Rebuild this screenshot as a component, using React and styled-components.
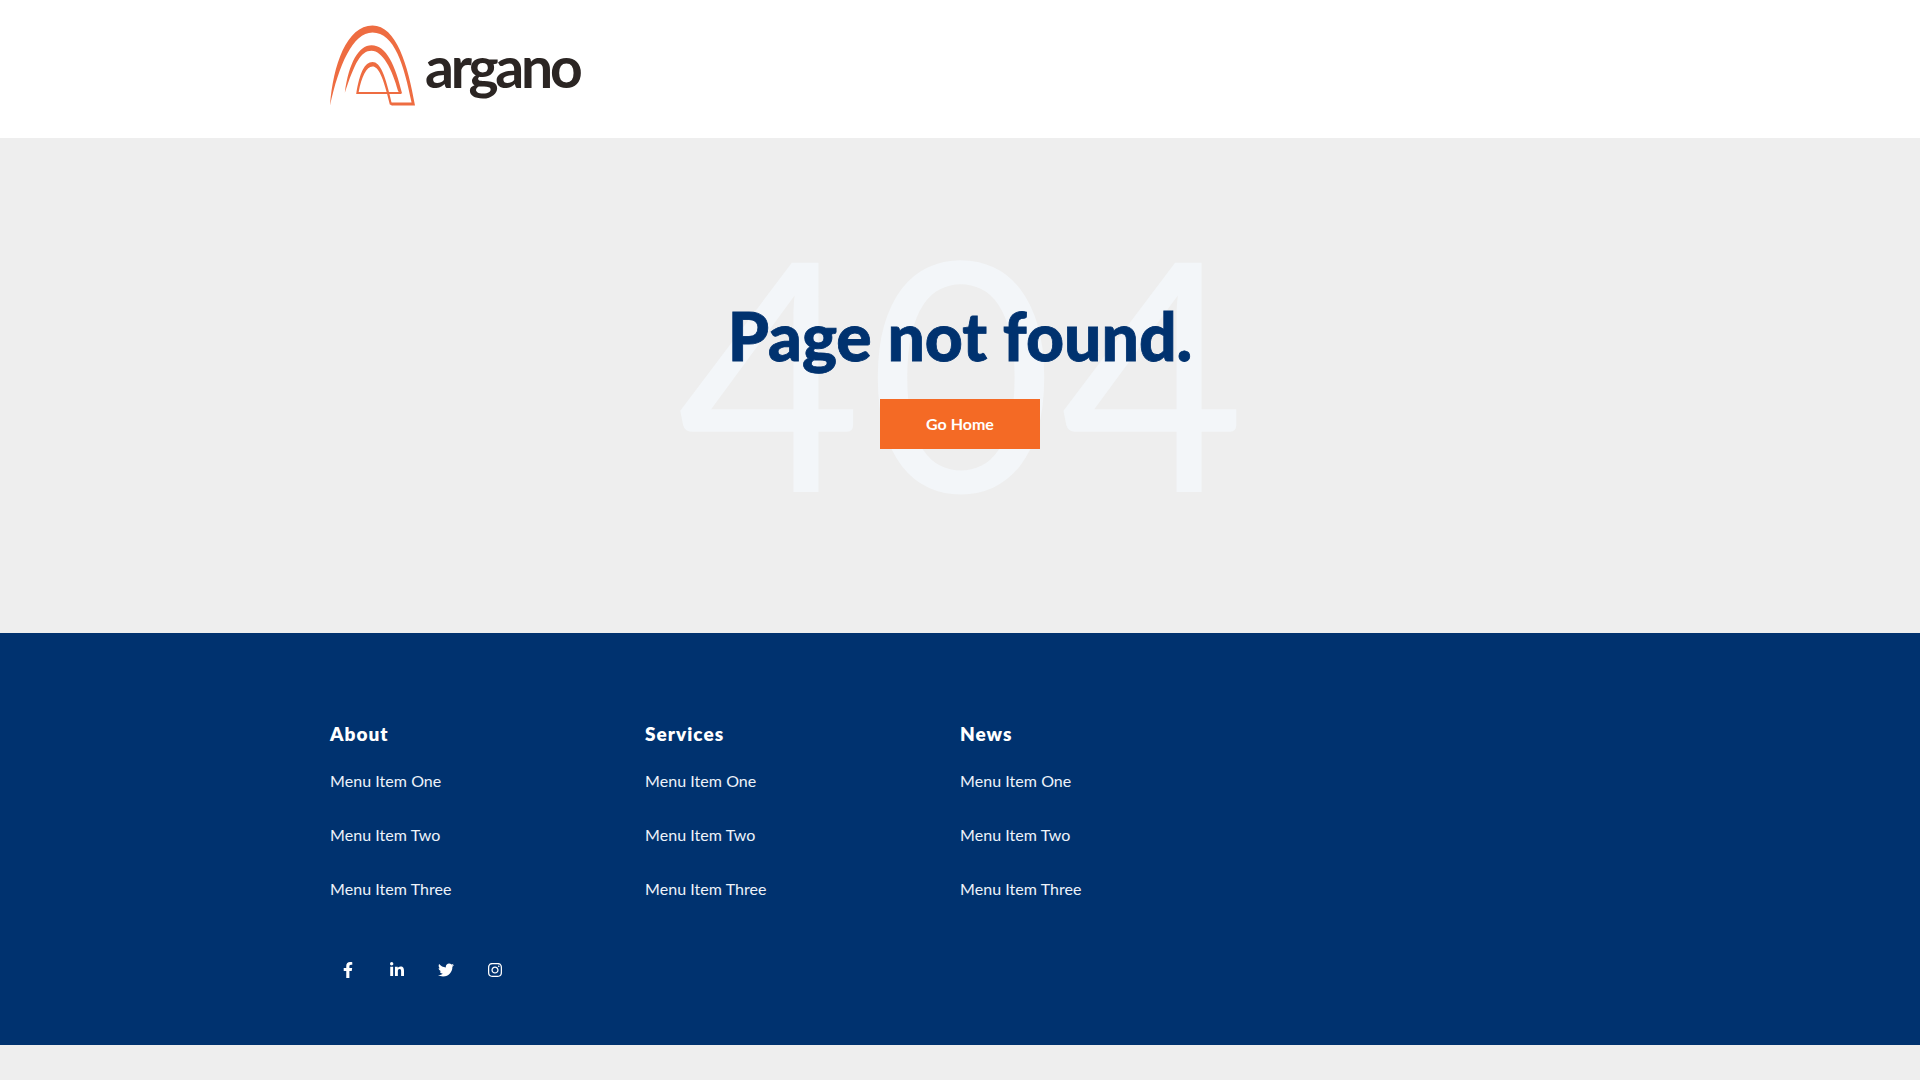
import React from "react";
import styled, { createGlobalStyle } from "styled-components";
import { FaFacebookF, FaLinkedinIn, FaTwitter, FaInstagram } from "react-icons/fa";

const GlobalStyle = createGlobalStyle`
  html, body {
    margin: 0;
    padding: 0;
    background-color: #eeeeee;
    font-family: "Lato", "Noto Sans", sans-serif;
  }
`;

const Header = styled.header`
  background-color: #ffffff;
  height: 138px;
  padding: 25px 329px 0;
  box-sizing: border-box;
`;

const LogoLink = styled.a`
  display: flex;
  align-items: flex-start;
  gap: 9px;
  width: 252px;
  height: 82px;
  svg {
    flex-shrink: 0;
  }
`;

const LogoText = styled.span`
  font-family: "Lato", sans-serif;
  font-size: 57px;
  font-weight: 700;
  line-height: 82px;
  letter-spacing: -3.2px;
  color: #2b2523;
`;

const Main = styled.main`
  position: relative;
  height: 495px;
  display: flex;
  flex-direction: column;
  align-items: center;
  padding-top: 163px;
  box-sizing: border-box;
  overflow: hidden;
`;

const Ghost = styled.div`
  position: absolute;
  top: 70px;
  left: 8px;
  right: 0;
  text-align: center;
  font-family: "Lato", sans-serif;
  font-weight: 400;
  font-size: 320px;
  line-height: 320px;
  letter-spacing: 6px;
  color: #f3f6f9;
`;

const Title = styled.h1`
  position: relative;
  margin: 0;
  font-family: "Lato", sans-serif;
  font-weight: 900;
  font-size: 66px;
  line-height: 70px;
  color: #00326f;
  -webkit-text-stroke: 0.8px #00326f;
`;

const HomeButton = styled.a`
  position: relative;
  display: flex;
  align-items: center;
  justify-content: center;
  width: 160px;
  height: 50px;
  padding-bottom: 2px;
  box-sizing: border-box;
  margin-top: 28px;
  background-color: #f46a25;
  color: #ffffff;
  font-weight: 700;
  font-size: 16px;
`;

const Footer = styled.footer`
  background-color: #00326f;
  height: 412px;
  padding: 87px 330px 0;
  box-sizing: border-box;
  color: #ffffff;
`;

const Columns = styled.div`
  display: grid;
  grid-template-columns: repeat(4, 315px);
`;

const ColumnTitle = styled.h4`
  margin: 0 0 21px;
  font-weight: 800;
  font-size: 19px;
  line-height: 28px;
  letter-spacing: 1px;
`;

const MenuItem = styled.a`
  display: block;
  font-size: 16px;
  line-height: 24px;
  margin-bottom: 30px;
  letter-spacing: 0.05px;
  color: #eef3fa;
`;

const Socials = styled.div`
  display: flex;
  margin-top: 20px;
  margin-left: -1px;
`;

const SocialLink = styled.a`
  display: flex;
  align-items: center;
  justify-content: center;
  width: 37px;
  height: 37px;
  margin-right: 12px;
  color: #ffffff;
  font-size: 16px;
`;

const columns = ["About", "Services", "News"];
const items = ["Menu Item One", "Menu Item Two", "Menu Item Three"];

function LogoMark() {
  return (
    <svg width="87" height="82" viewBox="0 0 88 82" fill="none">
      <path
        d="M1 81 C4 40 18 0 44 0 C68 0 80 40 87 81 L63.5 81 L62 78 L83.5 78 C76 40 66 7 44 7 C24 7 10 40 1 81 Z"
        fill="#ee6c41"
      />
      <path
        d="M16 68 C20 38 30 20 43 20 C58 20 67 40 74 69 L70 66.8 C64 44 54 25.5 43 25.5 C32 25.5 26 38 16 68 Z"
        fill="#ee6c41"
      />
      <path
        d="M27.5 69.4 C31 48 36 37 44 37 C52 37 57 50 64 81 L61.5 80 C55 52 50 41.5 44 41.5 C38 41.5 33 52 30 67.2 L73 67.2 L73 69.4 Z"
        fill="#ee6c41"
      />
    </svg>
  );
}

export default function App() {
  return (
    <>
      <GlobalStyle />
      <Header>
        <LogoLink>
          <LogoMark />
          <LogoText>argano</LogoText>
        </LogoLink>
      </Header>
      <Main>
        <Ghost>404</Ghost>
        <Title>Page not found.</Title>
        <HomeButton>Go Home</HomeButton>
      </Main>
      <Footer>
        <Columns>
          {columns.map(column => (
            <div key={column}>
              <ColumnTitle>{column}</ColumnTitle>
              {items.map(item => (
                <MenuItem key={item}>{item}</MenuItem>
              ))}
            </div>
          ))}
        </Columns>
        <Socials>
          <SocialLink><FaFacebookF /></SocialLink>
          <SocialLink><FaLinkedinIn /></SocialLink>
          <SocialLink><FaTwitter /></SocialLink>
          <SocialLink><FaInstagram /></SocialLink>
        </Socials>
      </Footer>
    </>
  );
}
